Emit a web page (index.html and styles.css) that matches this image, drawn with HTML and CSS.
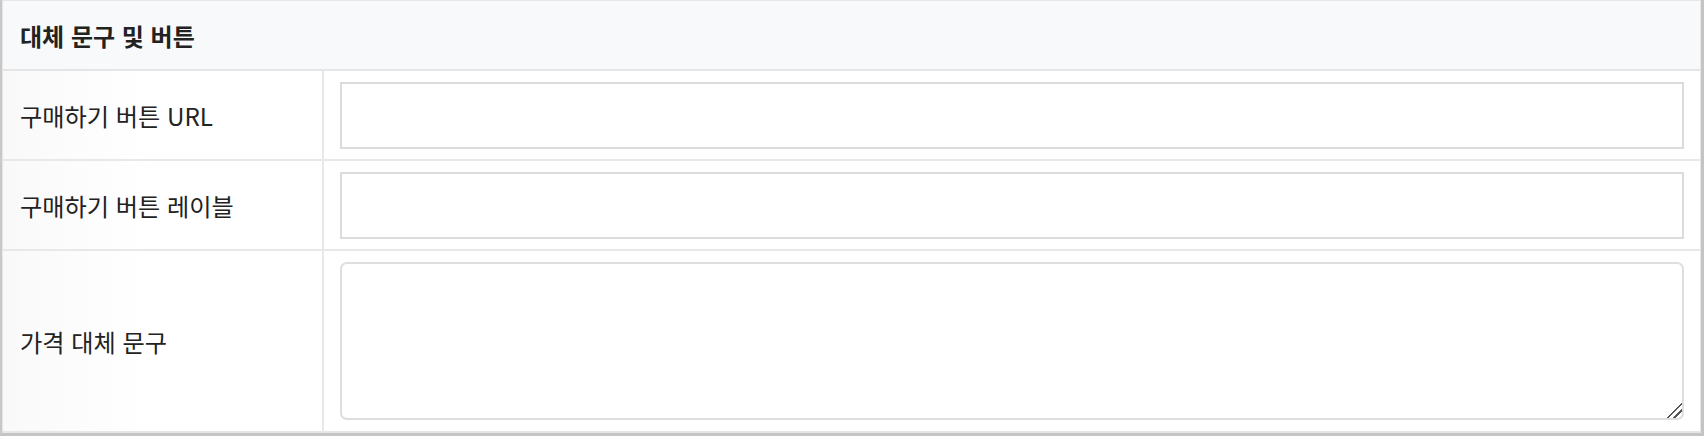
FILE: index.html
```html
<!DOCTYPE html>
<html lang="ko">
<head>
  <meta charset="UTF-8">
  <meta name="viewport" content="width=device-width, initial-scale=1.0">
  <title>대체 문구 및 버튼</title>
  <link rel="stylesheet" href="styles.css">
</head>
<body>
  <div class="frame">
    <table class="settings">
      <thead>
        <tr>
          <th colspan="2" class="section-title">대체 문구 및 버튼</th>
        </tr>
      </thead>
      <tbody>
        <tr>
          <td class="label">구매하기 버튼 URL</td>
          <td class="field"><input type="text" class="text-input"></td>
        </tr>
        <tr>
          <td class="label">구매하기 버튼 레이블</td>
          <td class="field"><input type="text" class="text-input"></td>
        </tr>
        <tr class="last">
          <td class="label">가격 대체 문구</td>
          <td class="field field-area"><textarea class="text-area"></textarea></td>
        </tr>
      </tbody>
    </table>
  </div>
</body>
</html>
```

FILE: styles.css
```css
body {
  margin: 0;
  padding: 0;
  background: #ffffff;
  font-family: "Noto Sans CJK KR", "Noto Sans", sans-serif;
  color: #222222;
}

.frame {
  width: 1699px;
  border-left: 2px solid #c8c8c8;
  border-right: 3px solid #c4c4c4;
  border-bottom: 3px solid #c4c4c4;
}

.settings {
  width: 100%;
  border-collapse: separate;
  border-spacing: 0;
  border: 1px solid #e6e6e6;
  border-bottom-width: 2px;
  font-size: 24.2px;
}

.section-title {
  height: 68px;
  padding: 0 0 0 17px;
  text-align: left;
  font-weight: bold;
  font-size: 24px;
  background-color: #f8f9fa;
  border-bottom: 2px solid #e5e5e5;
}

.label {
  width: 302px;
  padding: 0 0 0 17px;
  vertical-align: middle;
  border-right: 2px solid #e8e8e8;
  border-bottom: 2px solid #e8e8e8;
  background: linear-gradient(to right, #f9f9f9, #ffffff 45%);
}

.field {
  padding: 11px 16px 10px 16px;
  border-bottom: 2px solid #e8e8e8;
}

.last .label,
.last .field {
  border-bottom: none;
}

.field-area {
  padding-bottom: 11px;
}

.text-input {
  display: block;
  box-sizing: border-box;
  width: 100%;
  height: 67px;
  margin: 0;
  border: 2px solid #dcdcdc;
  border-radius: 0;
  outline: none;
  font: inherit;
}

.text-area {
  display: block;
  box-sizing: border-box;
  width: 100%;
  height: 158px;
  margin: 0;
  border: 2px solid #dedede;
  border-radius: 7px;
  outline: none;
  font: inherit;
}

.text-area::-webkit-resizer {
  background: linear-gradient(135deg,
    transparent 48%, #555555 48%, #555555 56%,
    transparent 56%, transparent 70%, #555555 70%, #555555 78%,
    transparent 78%);
}
```
